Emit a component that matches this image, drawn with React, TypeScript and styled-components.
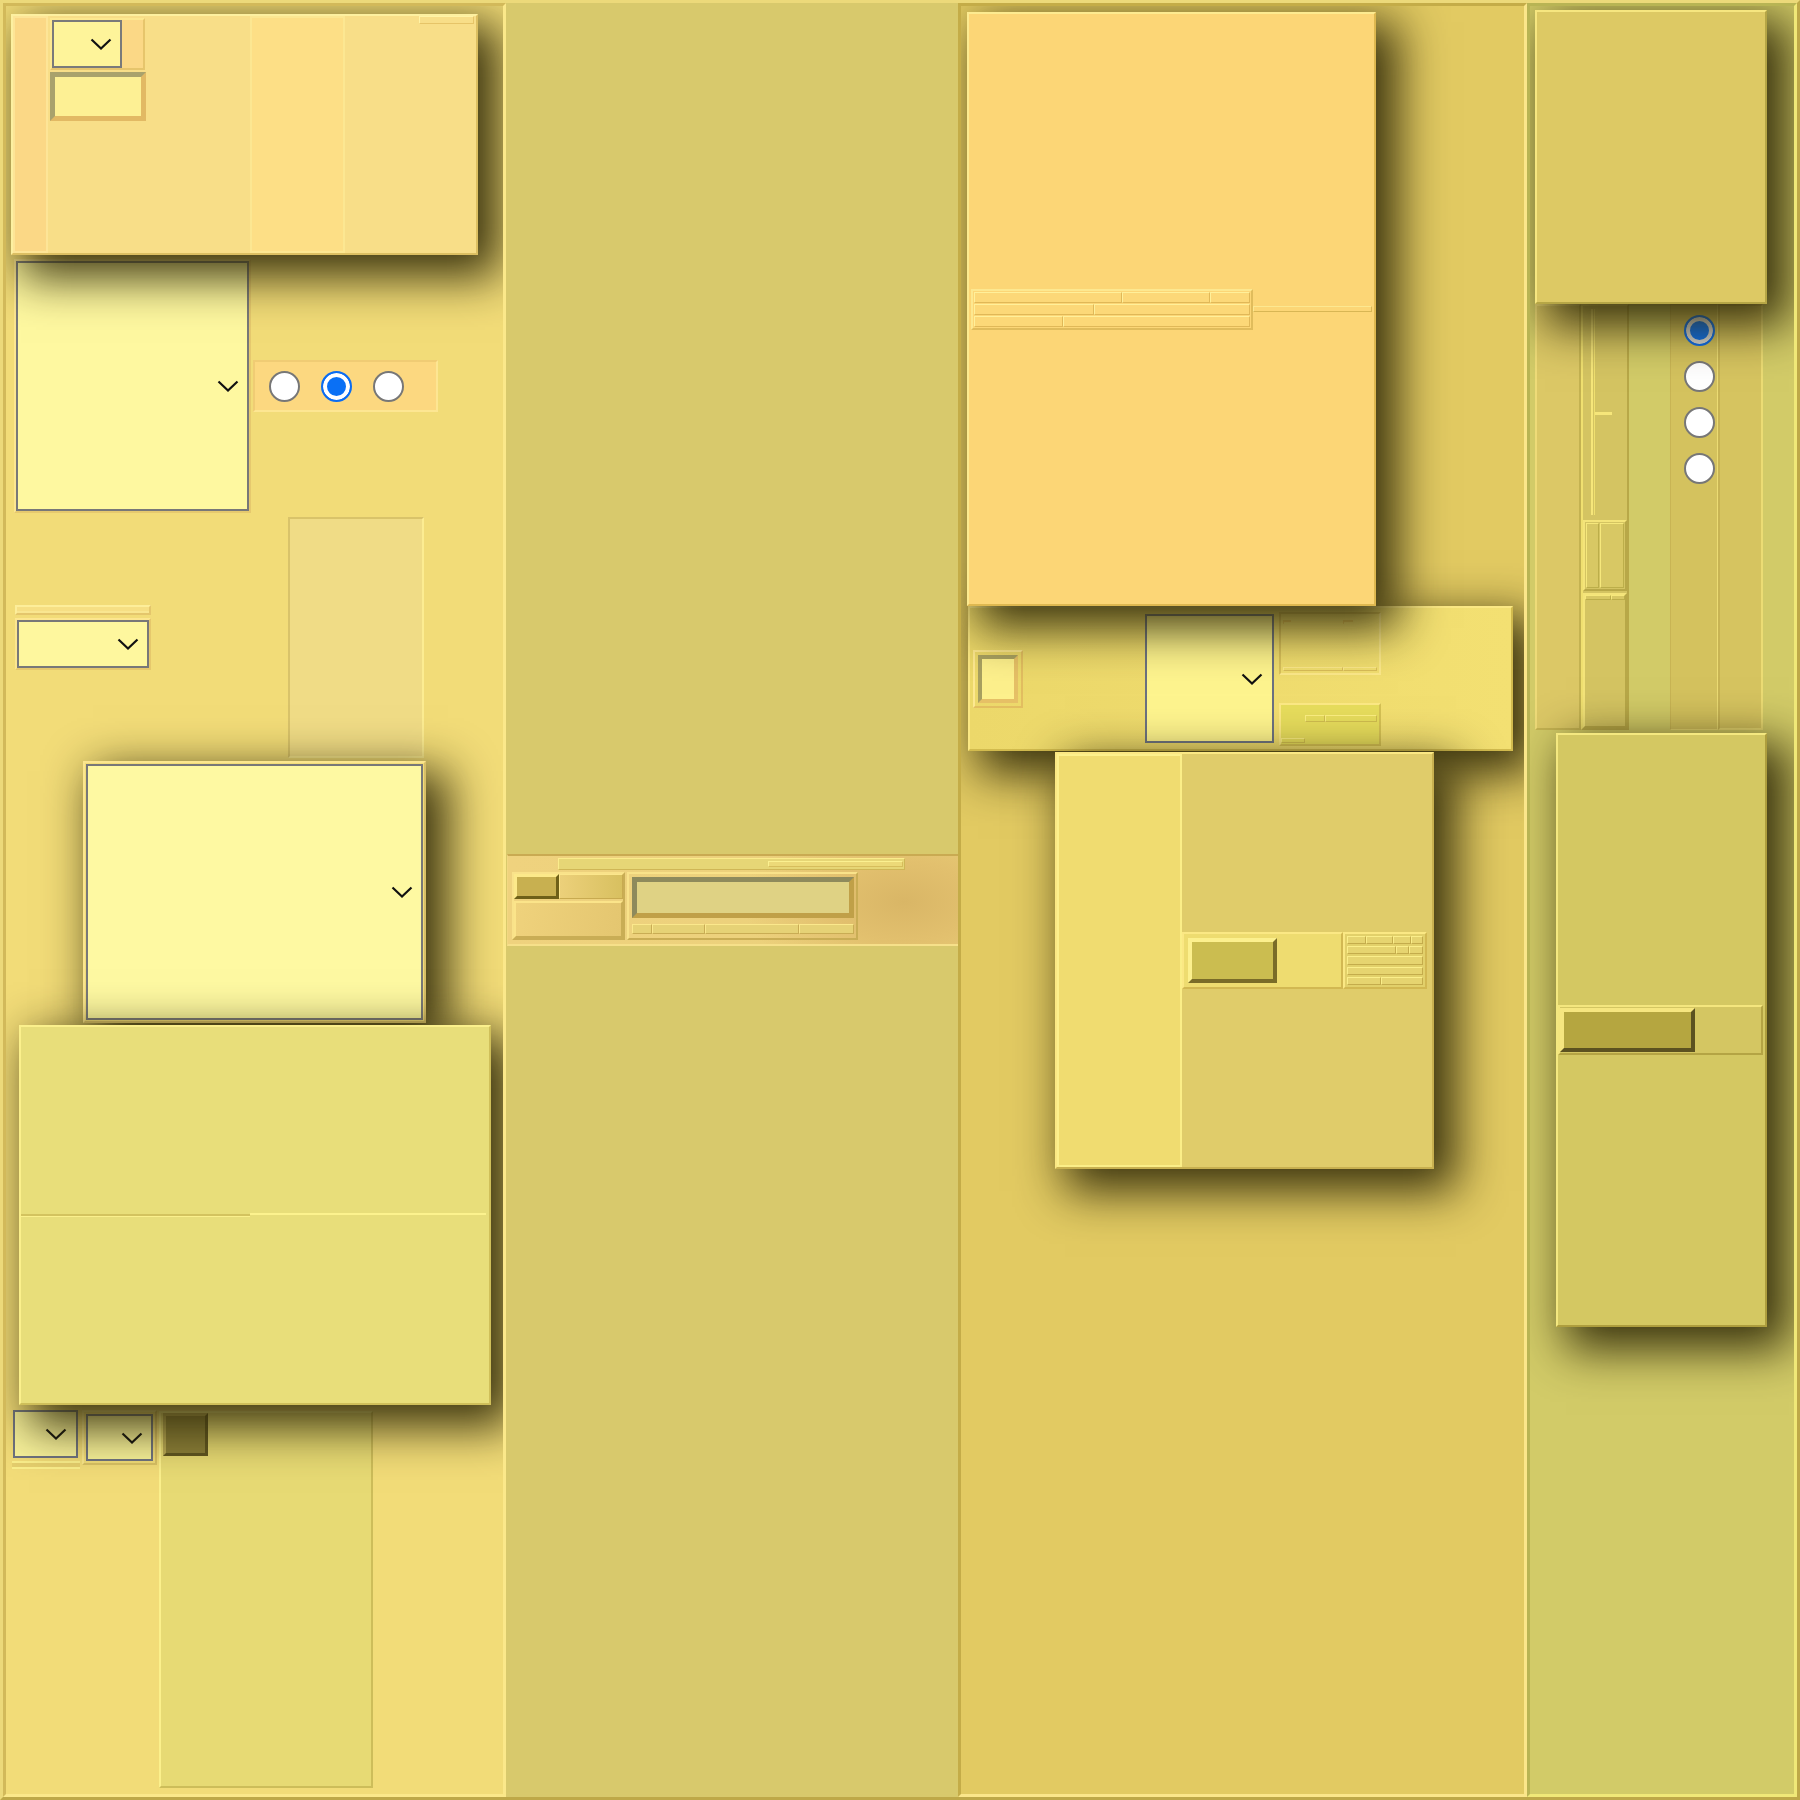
import React from 'react';
import styled, { createGlobalStyle, css } from 'styled-components';

const bevel = (tl: string, br: string, w = 2) => css`
  border-style: solid;
  border-width: ${w}px;
  border-color: ${tl} ${br} ${br} ${tl};
`;

const SHADOW = '16px 16px 44px 6px rgba(48, 42, 8, 0.95)';

const GlobalStyle = createGlobalStyle`
  *, *::before, *::after { box-sizing: border-box; }
  html, body { margin: 0; padding: 0; background: #d9c86a; }
  body { font-family: "Liberation Sans", Arial, sans-serif; }
  #root { width: 1800px; height: 1800px; }
`;

type BoxProps = {
  $w?: number;
  $h?: number;
  $ml?: number;
  $mt?: number;
  $mr?: number;
  $bg?: string;
  $tl?: string;
  $br?: string;
  $bw?: number;
  $grow?: boolean;
};

const Block = styled.div<BoxProps>`
  flex: ${p => (p.$grow ? '1 1 0' : 'none')};
  width: ${p => (p.$w != null ? `${p.$w}px` : 'auto')};
  height: ${p => (p.$h != null ? `${p.$h}px` : 'auto')};
  margin: ${p => `${p.$mt ?? 0}px ${p.$mr ?? 0}px 0 ${p.$ml ?? 0}px`};
  background: ${p => p.$bg ?? 'transparent'};
  ${p => bevel(p.$tl ?? 'transparent', p.$br ?? 'transparent', p.$bw ?? 2)}
`;

const Frame = styled.div`
  width: 1800px;
  height: 1800px;
  display: grid;
  grid-template-columns: 503px 452px 569px 270px;
  background: #d9c86a;
  ${bevel('#ecd97a', '#bea848', 3)}
`;

const Column = styled.div<{ $bg: string; $tl: string; $br: string; $bw?: number; $center?: boolean }>`
  display: flex;
  flex-direction: column;
  justify-content: ${p => (p.$center ? 'center' : 'flex-start')};
  min-height: 0;
  overflow: hidden;
  background: ${p => p.$bg};
  ${p => bevel(p.$tl, p.$br, p.$bw ?? 3)}
`;

/* floating surfaces with drop shadow */
const Surface = styled(Block)<{ $z?: number }>`
  position: relative;
  z-index: ${p => p.$z ?? 2};
  box-shadow: ${SHADOW};
`;

const Row = styled.div<{ $mt: number; $h: number; $align?: string }>`
  display: flex;
  flex: none;
  align-items: ${p => p.$align ?? 'center'};
  height: ${p => p.$h}px;
  margin-top: ${p => p.$mt}px;
`;

/* select widgets */
const SelectFrame = styled(Block)<{ $pad?: number; $raised?: boolean }>`
  display: flex;
  padding: ${p => p.$pad ?? 0}px;
  position: ${p => (p.$raised ? 'relative' : 'static')};
  z-index: ${p => (p.$raised ? 2 : 'auto')};
  box-shadow: ${p => (p.$raised ? SHADOW : 'none')};
`;

const SelectField = styled.div<{ $w?: number; $h?: number; $ml?: number; $bg?: string; $edge?: string; $pr?: number }>`
  flex: ${p => (p.$w != null ? 'none' : '1 1 0')};
  width: ${p => (p.$w != null ? `${p.$w}px` : 'auto')};
  height: ${p => (p.$h != null ? `${p.$h}px` : 'auto')};
  margin-left: ${p => p.$ml ?? 0}px;
  display: flex;
  align-items: center;
  justify-content: flex-end;
  padding-right: ${p => p.$pr ?? 8}px;
  background: ${p => p.$bg ?? '#fef79f'};
  border: 2px solid ${p => p.$edge ?? '#787878'};
`;

const Chevron = () => (
  <svg width="22" height="12" viewBox="0 0 22 12" aria-hidden="true">
    <polyline points="1.5,1.5 11,10.5 20.5,1.5" fill="none" stroke="#111" strokeWidth="2.2" />
  </svg>
);

const Radio = styled.span<{ $checked?: boolean; $ring?: string }>`
  flex: none;
  display: block;
  width: 31px;
  height: 31px;
  border-radius: 50%;
  border: 2px solid ${p => (p.$checked ? '#0b6cf2' : '#777777')};
  background: ${p => (p.$checked ? '#0a70f5' : '#ffffff')};
  box-shadow: ${p => (p.$checked ? `inset 0 0 0 4px ${p.$ring ?? '#ffffff'}` : 'none')};
`;

/* segmented ridge rows */
const SegRow = styled.div<{ $h?: number; $mt?: number }>`
  display: flex;
  flex: ${p => (p.$h != null ? 'none' : '1 1 0')};
  height: ${p => (p.$h != null ? `${p.$h}px` : 'auto')};
  margin-top: ${p => p.$mt ?? 0}px;
`;

const Seg = styled.div<{ $g: number; $bg: string; $tl: string; $br: string }>`
  flex: ${p => p.$g} 1 0;
  background: ${p => p.$bg};
  ${p => bevel(p.$tl, p.$br, 1)}
`;

/* ---- column 1 parts ---- */
const PanelA = styled(Surface)`
  display: flex;
`;
const StripCell = styled(Block)``;
const ControlCell = styled.div`
  flex: none;
  width: 202px;
  display: flex;
  flex-direction: column;
  padding: 2px 0 0 2px;
`;
const MiniSelectRow = styled(Block)`
  display: flex;
`;
const OrangeFill = styled.div`
  flex: 1;
  background: #fbd886;
`;
const TextInput = styled(Block)``;
const WideCell = styled(Block)`
  display: flex;
  justify-content: flex-end;
  align-items: flex-start;
`;
const Notch = styled(Block)``;

const RadioGroup = styled(Block)`
  display: flex;
  align-items: center;
  gap: 21px;
  padding-left: 14px;
`;

const LeftGroup = styled.div`
  flex: none;
  width: 136px;
  margin-left: 9px;
  display: flex;
  flex-direction: column;
  gap: 3px;
`;
const ThinBar = styled(Block)`
  box-shadow: inset 0 -2px 0 #f9e690;
`;
const TallBox = styled(Block)`
  display: flex;
  align-items: flex-start;
  padding-left: 2px;
`;

const PanelB = styled(Surface)`
  display: flex;
  flex-direction: column;
`;
const PanelBTop = styled.div`
  flex: 1;
`;
const PanelBBottom = styled.div`
  flex: none;
  height: 189px;
  display: flex;
`;
const PanelBLeft = styled.div`
  flex: none;
  width: 229px;
  border-top: 2px solid #d3c35f;
  box-shadow: inset 0 1px 0 #fbf08c;
`;
const PanelBRight = styled.div`
  flex: 1;
  margin-right: 3px;
  margin-top: -1px;
  border-top: 2px solid #fcf28e;
`;

const SmallStack = styled.div`
  flex: none;
  width: 68px;
  margin-left: 6px;
  display: flex;
  flex-direction: column;
`;
const DoubleBar = styled.div`
  height: 8px;
  margin-top: 3px;
  background: #e6cf6e;
  border-top: 2px solid #fbef8c;
  border-bottom: 2px solid #fbef8c;
`;
const DarkButton = styled(Block)``;

/* ---- column 2 parts ---- */
const Widget = styled.div`
  flex: none;
  width: 451px;
  height: 92px;
  margin-left: 1px;
  display: flex;
  flex-direction: column;
  border-top: 2px solid #c9aa52;
  border-left: 1px solid #f2d882;
  border-bottom: 2px solid #f6e08a;
  background: radial-gradient(ellipse 160px 90px at 88% 52%, #d9b666 0%, #e2c06e 45%, rgba(239, 210, 126, 0) 100%),
    linear-gradient(90deg, #efd27e 0%, #ead07a 100%);
`;
const TopRail = styled(Block)`
  display: flex;
  justify-content: flex-end;
  align-items: center;
`;
const RailSeg = styled(Block)``;
const WidgetBody = styled.div`
  flex: none;
  height: 68px;
  margin: 2px 0 0 4px;
  display: flex;
  gap: 2px;
`;
const Pod = styled(Block)<{ $pad?: string }>`
  display: flex;
  flex-direction: column;
  padding: ${p => p.$pad ?? '0'};
`;
const PodTop = styled.div`
  flex: none;
  height: 25px;
  display: flex;
`;
const PodFill = styled(Block)``;
const InsetField = styled(Block)``;

/* ---- column 3 parts ---- */
const PanelC = styled(Surface)`
  display: flex;
  align-items: center;
  padding: 0 2px;
`;
const ListBox = styled(Block)`
  display: flex;
  flex-direction: column;
  gap: 1px;
  padding: 1px;
`;
const Rule = styled(Block)``;

const Toolbar = styled(Surface)`
  display: flex;
  align-items: center;
  padding-left: 3px;
`;
const CheckWrap = styled(Block)`
  display: flex;
  padding: 3px;
`;
const CheckInner = styled(Block)``;
const RightStack = styled.div`
  flex: none;
  width: 102px;
  margin-left: 5px;
  display: flex;
  flex-direction: column;
`;
const InfoBox = styled(Block)`
  display: flex;
  flex-direction: column;
  justify-content: space-between;
  padding: 6px 2px 2px 2px;
`;
const TickRow = styled.div`
  display: flex;
  justify-content: space-between;
  padding-right: 24px;
`;
const Tick = styled.div<{ $w: number }>`
  width: ${p => p.$w}px;
  height: 4px;
  border-top: 2px solid #e6c45a;
  border-left: 1px solid #e6c45a;
`;
const InfoBox2 = styled(Block)`
  display: flex;
  flex-direction: column;
  justify-content: space-between;
  padding: 10px 2px 1px 0;
`;
const InfoSegs = styled(SegRow)<{ $indent?: number; $width?: number }>`
  margin-left: ${p => p.$indent ?? 0}px;
  width: ${p => (p.$width != null ? `${p.$width}px` : 'auto')};
`;

const PanelE = styled(Surface)`
  display: flex;
`;
const SideCol = styled(Block)``;
const RightArea = styled.div`
  flex: 1;
  display: flex;
  align-items: center;
`;
const Track = styled(Block)`
  display: flex;
  align-items: center;
  padding: 4px;
`;
const Thumb = styled(Block)``;
const MiniList = styled(Block)`
  display: flex;
  flex-direction: column;
  gap: 2px;
  padding: 2px;
`;

/* ---- column 4 parts ---- */
const LaneRow = styled.div`
  flex: none;
  display: flex;
  width: 228px;
  height: 426px;
  margin-left: 5px;
`;
const Lane = styled(Block)`
  display: flex;
  flex-direction: column;
`;
const RadioLane = styled(Block)`
  display: flex;
  flex-direction: column;
  gap: 15px;
  padding: 10px 0 0 13px;
`;
const LaneTop = styled.div`
  flex: none;
  height: 214px;
  display: flex;
  align-items: flex-start;
`;
const VLine = styled.div`
  width: 4px;
  height: 206px;
  margin: 3px 0 0 8px;
  border-left: 2px solid #f6e67a;
  border-right: 1px solid #f0e070;
`;
const HTick = styled.div`
  width: 17px;
  height: 3px;
  margin-top: 106px;
  background: #f6e67a;
`;
const LaneMid = styled(Block)`
  display: flex;
  gap: 1px;
  padding: 1px;
`;
const PanelG = styled(Surface)`
  display: flex;
  align-items: center;
  padding-right: 2px;
`;
const Slider = styled(Block)`
  display: flex;
  align-items: center;
`;

const segA = { $bg: '#fcd878', $tl: '#fff09a', $br: '#e0b858' };
const segW = { $bg: '#e6d276', $tl: '#fbe88c', $br: '#c9ac54' };
const segE = { $bg: '#e6d470', $tl: '#fbee8a', $br: '#c4ac4c' };
const segI = { $bg: '#e6dc5c', $tl: '#fbee80', $br: '#cfbc4e' };
const segL = { $bg: '#d8c864', $tl: '#f6e87c', $br: '#bcae4a' };

export default function App() {
  return (
    <>
      <GlobalStyle />
      <Frame>
        {/* ============ column 1 ============ */}
        <Column $bg="#f2dc78" $tl="#d2b95a" $br="#fbe88a">
          <PanelA $z={3} $w={467} $h={241} $ml={5} $mt={8} $bg="#f8de88" $tl="#fdf0a0" $br="#dcbf62">
            <StripCell $w={35} $bg="#fbd886" $tl="#fde597" $br="#fde597" />
            <ControlCell>
              <MiniSelectRow $w={95} $h={52} $tl="#fde890" $br="#e6c56c">
                <SelectField $w={70} $bg="#fef49a" $edge="#7a7a7a">
                  <Chevron />
                </SelectField>
                <OrangeFill />
              </MiniSelectRow>
              <TextInput $w={96} $h={49} $mt={2} $bw={5} $bg="#fdf094" $tl="#a9a26c" $br="#e2b964" />
            </ControlCell>
            <StripCell $w={95} $bg="#fddf86" $tl="#fce792" $br="#fce792" />
            <WideCell $grow $bw={0}>
              <Notch $w={55} $h={8} $mr={2} $bw={1} $bg="#f8de88" $tl="#fff3a6" $br="#e6c468" />
            </WideCell>
          </PanelA>

          <Row $mt={4} $h={254}>
            <SelectFrame $w={237} $h={254} $ml={8} $tl="#fce690" $br="#e6c96e">
              <SelectField $bg="#fef8a0">
                <Chevron />
              </SelectField>
            </SelectFrame>
            <RadioGroup $w={185} $h={52} $ml={2} $bg="#fcd880" $tl="#f0cc74" $br="#fde692">
              <Radio />
              <Radio $checked />
              <Radio />
            </RadioGroup>
          </Row>

          <Row $mt={4} $h={241}>
            <LeftGroup>
              <ThinBar $h={10} $bg="#f6df84" $tl="#fdee9a" $br="#e4c66c" />
              <SelectFrame $w={136} $h={52} $tl="#fce690" $br="#e6c86c">
                <SelectField $bg="#fef79e">
                  <Chevron />
                </SelectField>
              </SelectFrame>
            </LeftGroup>
            <TallBox $w={136} $h={241} $ml={137} $bg="#f0dc86" $tl="#d9c36a" $br="#fcec92" />
          </Row>

          <SelectFrame $raised $w={343} $h={262} $ml={77} $mt={3} $pad={1} $tl="#fbe68e" $br="#d8bf68">
            <SelectField $bg="#fef9a2" $pr={8}>
              <Chevron />
            </SelectField>
          </SelectFrame>

          <PanelB $w={472} $h={380} $ml={13} $mt={2} $bg="#e8de7a" $tl="#fbf08c" $br="#cfbf5a">
            <PanelBTop />
            <PanelBBottom>
              <PanelBLeft />
              <PanelBRight />
            </PanelBBottom>
          </PanelB>

          <Row $mt={5} $h={378} $align="flex-start">
            <SmallStack>
              <SelectField $w={65} $h={48} $ml={1} $bg="#f9f39c" $edge="#6e7280" $pr={9}>
                <Chevron />
              </SelectField>
              <DoubleBar />
            </SmallStack>
            <SelectFrame $w={75} $h={55} $ml={2} $pad={2} $tl="#fbe88c" $br="#d8c064">
              <SelectField $bg="#f8f29a" $edge="#6e7280">
                <Chevron />
              </SelectField>
            </SelectFrame>
            <TallBox $w={214} $h={377} $ml={2} $mt={1} $bg="#e7da74" $tl="#fbf08c" $br="#cdbd5a">
              <DarkButton $w={45} $h={43} $bw={3} $bg="#8a7e38" $tl="#b9a955" $br="#5e5420" />
            </TallBox>
          </Row>
        </Column>

        {/* ============ column 2 ============ */}
        <Column $bg="#d8c96c" $tl="#d8c96c" $br="#d8c96c" $bw={0} $center>
          <Widget>
            <TopRail $w={347} $h={12} $ml={50} $mt={2} $bw={1} $bg="#e6d676" $tl="#fbec8c" $br="#cfb656">
              <RailSeg $w={135} $h={6} $mr={1} $bw={1} $bg="#ecd978" $tl="#fbf090" $br="#d6bd5c" />
            </TopRail>
            <WidgetBody>
              <Pod $w={113} $tl="#f9e28a" $br="#c9ad55">
                <PodTop>
                  <DarkButton $w={45} $h={25} $bw={3} $bg="#c8b050" $tl="#fce98a" $br="#6e6018" />
                  <PodFill $grow $bw={1} $bg="linear-gradient(90deg,#ecd07a,#d8c060)" $tl="#fbe68c" $br="#c8aa50" />
                </PodTop>
                <PodFill $grow $mt={2} $bg="linear-gradient(100deg,#efd27c,#e4c670)" $tl="#fbe48a" $br="#c9ad55" />
              </Pod>
              <Pod $w={231} $tl="#f9e28a" $br="#c9ad55" $pad="3px 2px 2px 3px">
                <InsetField $h={41} $bw={5} $bg="#dfd284" $tl="#8e8a5c" $br="#c0a048" />
                <SegRow $h={10} $mt={6}>
                  <Seg $g={19} {...segW} />
                  <Seg $g={53} {...segW} />
                  <Seg $g={95} {...segW} />
                  <Seg $g={55} {...segW} />
                </SegRow>
              </Pod>
            </WidgetBody>
          </Widget>
        </Column>

        {/* ============ column 3 ============ */}
        <Column $bg="#e2ca62" $tl="#c4ac48" $br="#fbe68a">
          <PanelC $z={3} $w={409} $h={594} $ml={6} $mt={6} $bg="#fcd676" $tl="#fdeb90" $br="#deb850">
            <ListBox $w={282} $h={41} $bg="#fcd676" $tl="#fde890" $br="#e0bc5c">
              <SegRow>
                <Seg $g={152} {...segA} />
                <Seg $g={89} {...segA} />
                <Seg $g={40} {...segA} />
              </SegRow>
              <SegRow>
                <Seg $g={122} {...segA} />
                <Seg $g={160} {...segA} />
              </SegRow>
              <SegRow>
                <Seg $g={90} {...segA} />
                <Seg $g={192} {...segA} />
              </SegRow>
            </ListBox>
            <Rule $grow $h={6} $bw={1} $bg="#fcd676" $tl="#fde890" $br="#d8b654" />
          </PanelC>

          <Toolbar
            $w={545}
            $h={145}
            $ml={7}
            $bg="linear-gradient(90deg,#ecd86a 0%,#f3e072 100%)"
            $tl="#fbe884"
            $br="#d2bb4e"
          >
            <CheckWrap $w={50} $h={58} $tl="#fde890" $br="#e2be60">
              <CheckInner $grow $bw={4} $bg="#fdf08c" $tl="#a8a060" $br="#e6c066" />
            </CheckWrap>
            <SelectField $w={129} $h={129} $ml={122} $bg="#fef48e" $edge="#6b7181" $pr={9}>
              <Chevron />
            </SelectField>
            <RightStack>
              <InfoBox $h={63} $tl="#d8c05a" $br="#fbe88a">
                <TickRow>
                  <Tick $w={8} />
                  <Tick $w={10} />
                </TickRow>
                <SegRow $h={4}>
                  <Seg $g={55} $bg="transparent" $tl="#fbe88a" $br="#d8bc58" />
                  <Seg $g={30} $bg="transparent" $tl="#fbe88a" $br="#d8bc58" />
                </SegRow>
              </InfoBox>
              <InfoBox2 $h={43} $mt={28} $bg="#e6dc5c" $tl="#fbe884" $br="#d4c054">
                <InfoSegs $h={7} $indent={24}>
                  <Seg $g={20} {...segI} />
                  <Seg $g={54} {...segI} />
                </InfoSegs>
                <InfoSegs $h={5} $width={24}>
                  <Seg $g={1} {...segI} />
                </InfoSegs>
              </InfoBox2>
            </RightStack>
          </Toolbar>

          <PanelE $w={379} $h={417} $ml={94} $mt={1} $bg="#e0cc6a" $tl="#fbe884" $br="#c8b050">
            <SideCol $w={125} $bg="#f0dc70" $tl="#fdf08c" $br="#fbee88" />
            <RightArea>
              <Track $w={161} $h={57} $bg="#eedc70" $tl="#fbe884" $br="#d2b852">
                <Thumb $w={89} $h={45} $bw={4} $bg="#cbbd50" $tl="#fcf08e" $br="#7a6c28" />
              </Track>
              <MiniList $w={84} $h={57} $bg="#e2d06a" $tl="#fbe884" $br="#d2b852">
                <SegRow>
                  <Seg $g={20} {...segE} />
                  <Seg $g={29} {...segE} />
                  <Seg $g={18} {...segE} />
                  <Seg $g={12} {...segE} />
                </SegRow>
                <SegRow>
                  <Seg $g={52} {...segE} />
                  <Seg $g={13} {...segE} />
                  <Seg $g={13} {...segE} />
                </SegRow>
                <SegRow>
                  <Seg $g={1} {...segE} />
                </SegRow>
                <SegRow>
                  <Seg $g={1} {...segE} />
                </SegRow>
                <SegRow>
                  <Seg $g={35} {...segE} />
                  <Seg $g={43} {...segE} />
                </SegRow>
              </MiniList>
            </RightArea>
          </PanelE>
        </Column>

        {/* ============ column 4 ============ */}
        <Column $bg="#d2cb68" $tl="#b8b454" $br="#f0e878">
          <Surface $w={232} $h={294} $ml={5} $mt={4} $bg="#ddc964" $tl="#f6e680" $br="#b6a646" />
          <LaneRow>
            <Lane $w={46} $bg="#dcc866" $tl="#eedb78" $br="#c4b252" />
            <Lane $w={48} $bg="#d4c462" $tl="#f0e070" $br="#b8a848">
              <LaneTop>
                <VLine />
                <HTick />
              </LaneTop>
              <LaneMid $h={71} $tl="#f4e47a" $br="#b8a848">
                <Seg $g={13} {...segL} />
                <Seg $g={25} {...segL} />
              </LaneMid>
              <Lane $grow $mt={2} $tl="#f4e47a" $br="#b8a848">
                <SegRow $h={5}>
                  <Seg $g={25} {...segL} />
                  <Seg $g={12} {...segL} />
                </SegRow>
              </Lane>
            </Lane>
            <Lane $w={41} $bw={0} />
            <RadioLane $w={48} $bw={1} $bg="#d4c25e" $tl="#c8b454" $br="#ecdc74">
              <Radio $checked $ring="#dcdcdc" />
              <Radio />
              <Radio />
              <Radio />
            </RadioLane>
            <Lane $w={45} $bg="#d6c460" $tl="#c8b454" $br="#ecdc74" />
          </LaneRow>
          <PanelG $w={211} $h={594} $ml={26} $mt={3} $bg="#d4c862" $tl="#f4e880" $br="#ae9e3e">
            <Slider $w={205} $h={50} $bg="#d4c662" $tl="#f4e67e" $br="#b4a444">
              <Thumb $w={135} $h={44} $bw={4} $bg="#b5a640" $tl="#f6e680" $br="#5c5220" />
            </Slider>
          </PanelG>
        </Column>
      </Frame>
    </>
  );
}
